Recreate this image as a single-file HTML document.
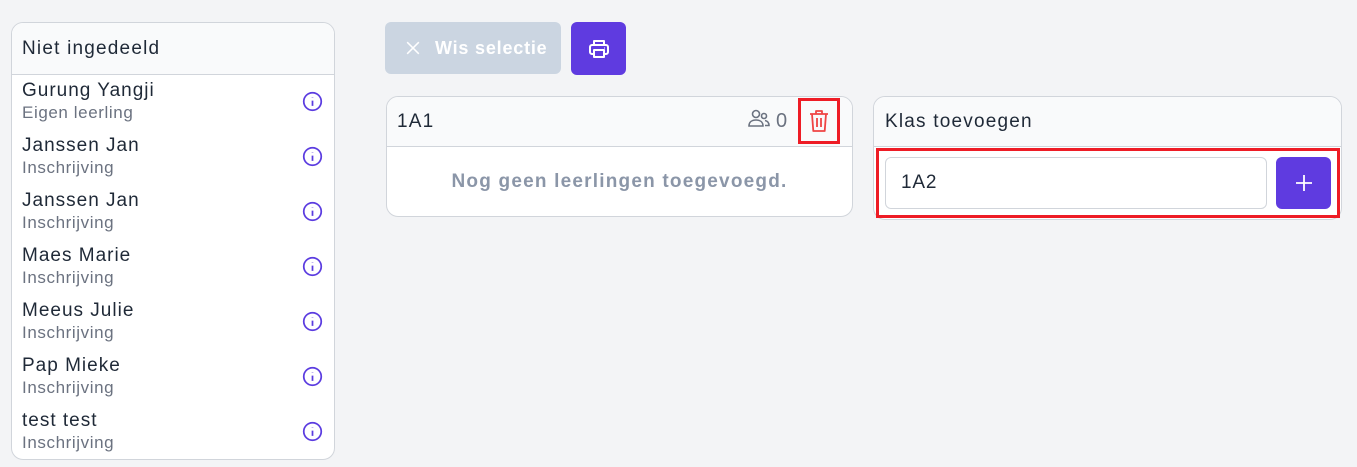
<!DOCTYPE html>
<html><head><meta charset="utf-8"><style>
*{box-sizing:border-box;margin:0;padding:0}
body{width:1357px;height:467px;background:#f3f4f6;font-family:"Liberation Sans",sans-serif;position:relative;overflow:hidden;color:#1f2937}
.abs{position:absolute}
.card{position:absolute;background:#fff;border:1px solid #d1d5db;border-radius:12px;overflow:hidden}
.hd{background:#f9fafb;border-bottom:1px solid #d1d5db;font-size:19px;letter-spacing:1.2px;color:#1f2937;padding-left:10px;display:flex;align-items:center}
.name{position:absolute;left:10px;font-size:19px;letter-spacing:1px;color:#1f2937;white-space:nowrap}
.sub{position:absolute;left:10px;font-size:17px;letter-spacing:0.6px;color:#6b7280;white-space:nowrap}
.info{position:absolute;left:290px;width:21px;height:21px}
</style></head><body>

<div class="card" style="left:11px;top:22px;width:324px;height:438px">
  <div class="hd" style="height:52px">Niet ingedeeld</div>
  <div class="name" style="top:57px">Gurung Yangji</div><div class="sub" style="top:80px">Eigen leerling</div>
  <div class="name" style="top:112px">Janssen Jan</div><div class="sub" style="top:135px">Inschrijving</div>
  <div class="name" style="top:167px">Janssen Jan</div><div class="sub" style="top:190px">Inschrijving</div>
  <div class="name" style="top:222px">Maes Marie</div><div class="sub" style="top:245px">Inschrijving</div>
  <div class="name" style="top:277px">Meeus Julie</div><div class="sub" style="top:300px">Inschrijving</div>
  <div class="name" style="top:332px">Pap Mieke</div><div class="sub" style="top:355px">Inschrijving</div>
  <div class="name" style="top:387px">test test</div><div class="sub" style="top:410px">Inschrijving</div>
  <svg class="info" style="top:68px" viewBox="0 0 24 24" fill="none" stroke="#5b3ce0" stroke-width="2"><circle cx="12" cy="12" r="10"/><path d="M12 11v6M12 7.5v.5"/></svg>
  <svg class="info" style="top:123px" viewBox="0 0 24 24" fill="none" stroke="#5b3ce0" stroke-width="2"><circle cx="12" cy="12" r="10"/><path d="M12 11v6M12 7.5v.5"/></svg>
  <svg class="info" style="top:178px" viewBox="0 0 24 24" fill="none" stroke="#5b3ce0" stroke-width="2"><circle cx="12" cy="12" r="10"/><path d="M12 11v6M12 7.5v.5"/></svg>
  <svg class="info" style="top:233px" viewBox="0 0 24 24" fill="none" stroke="#5b3ce0" stroke-width="2"><circle cx="12" cy="12" r="10"/><path d="M12 11v6M12 7.5v.5"/></svg>
  <svg class="info" style="top:288px" viewBox="0 0 24 24" fill="none" stroke="#5b3ce0" stroke-width="2"><circle cx="12" cy="12" r="10"/><path d="M12 11v6M12 7.5v.5"/></svg>
  <svg class="info" style="top:343px" viewBox="0 0 24 24" fill="none" stroke="#5b3ce0" stroke-width="2"><circle cx="12" cy="12" r="10"/><path d="M12 11v6M12 7.5v.5"/></svg>
  <svg class="info" style="top:398px" viewBox="0 0 24 24" fill="none" stroke="#5b3ce0" stroke-width="2"><circle cx="12" cy="12" r="10"/><path d="M12 11v6M12 7.5v.5"/></svg>
</div>

<div class="abs" style="left:385px;top:22px;width:176px;height:52px;background:#cbd5e1;border-radius:6px;color:#fff;font-weight:bold;font-size:18px;letter-spacing:0.8px;display:flex;align-items:center;padding-left:18px">
  <svg width="20" height="20" viewBox="0 0 24 24" fill="none" stroke="#fff" stroke-width="1.8" style="margin-right:12px"><path d="M5 5l14 14M19 5L5 19"/></svg>Wis selectie
</div>
<div class="abs" style="left:571px;top:22px;width:55px;height:53px;background:#5f3be0;border-radius:6px;display:flex;align-items:center;justify-content:center">
  <svg width="24" height="24" viewBox="0 0 24 24" fill="none" stroke="#fff" stroke-width="2" stroke-linejoin="round"><path d="M7 8V4h10v4"/><rect x="3" y="8" width="18" height="9" rx="2"/><rect x="7" y="13" width="10" height="7" fill="#5f3be0"/><path d="M17 11h.5"/></svg>
</div>

<div class="card" style="left:386px;top:96px;width:467px;height:121px">
  <div class="hd" style="height:50px">1A1</div>
  <svg class="abs" style="left:360px;top:10px" width="24" height="24" viewBox="0 0 24 24" fill="none" stroke="#6b7280" stroke-width="1.6"><circle cx="9" cy="7" r="3.5"/><path d="M2 19c0-4 3-6 7-6s7 2 7 6z"/><circle cx="17" cy="9" r="2.5"/><path d="M18 13.5c2.5.5 4 2 4 5h-4"/></svg>
  <div class="abs" style="left:389px;top:13px;font-size:20px;color:#6b7280">0</div>
  <div class="abs" style="left:411px;top:1px;width:42px;height:46px;border:3px solid #ee1c25"></div>
  <svg class="abs" style="left:421px;top:12px" width="22" height="24" viewBox="0 0 22 24" fill="none" stroke="#ef4444" stroke-width="1.8" stroke-linejoin="round"><path d="M2 5h18M8 5V2h6v3M4 5l1.3 17h11.4L18 5M9 9v9M13 9v9"/></svg>
  <div class="abs" style="left:0;top:74px;width:100%;text-align:center;font-size:19px;letter-spacing:1.2px;font-weight:bold;color:#8b96a8">Nog geen leerlingen toegevoegd.</div>
</div>

<div class="card" style="left:873px;top:96px;width:469px;height:124px">
  <div class="hd" style="height:50px;padding-left:11px">Klas toevoegen</div>
</div>
<div class="abs" style="left:876px;top:148px;width:464px;height:70px;border:3px solid #ee1c25"></div>
<div class="abs" style="left:885px;top:157px;width:382px;height:52px;background:#fff;border:1px solid #d1d5db;border-radius:6px;font-size:19px;letter-spacing:0.8px;padding-left:15px;display:flex;align-items:center;color:#1f2937">1A2</div>
<div class="abs" style="left:1276px;top:157px;width:55px;height:52px;background:#5f3be0;border-radius:6px;display:flex;align-items:center;justify-content:center">
  <svg width="20" height="20" viewBox="0 0 20 20" stroke="#fff" stroke-width="1.8"><path d="M10 2v16M2 10h16"/></svg>
</div>
</body></html>
